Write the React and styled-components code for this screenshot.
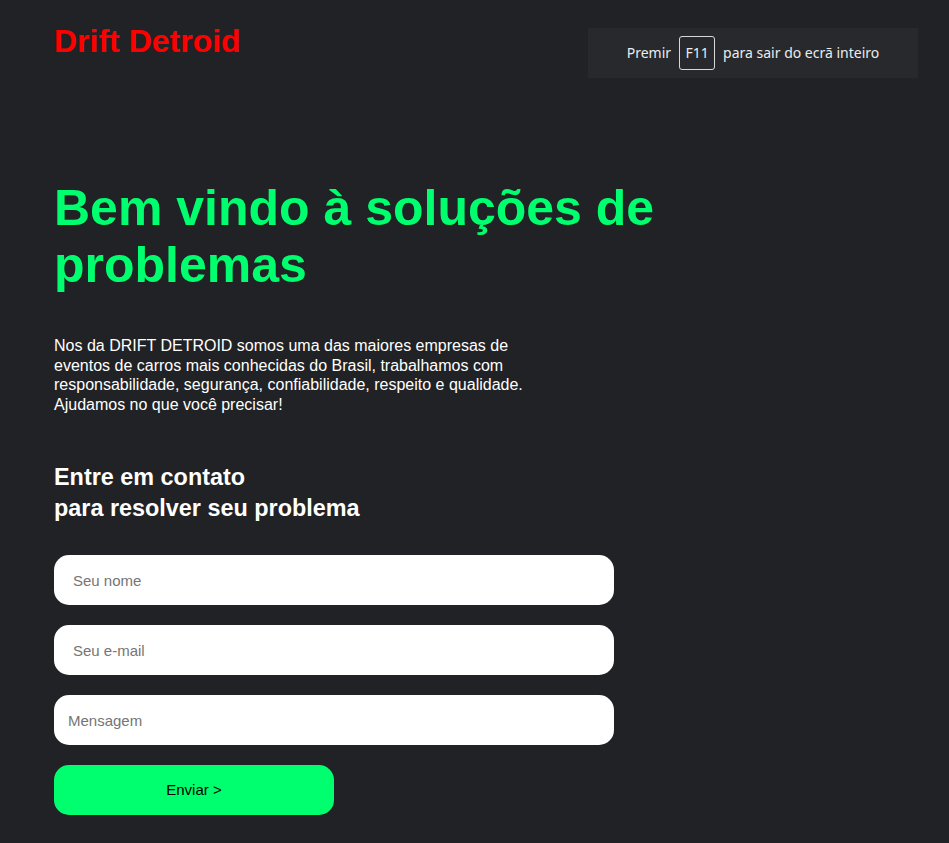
import React from "react";
import styled, { createGlobalStyle } from "styled-components";

const GlobalStyle = createGlobalStyle`
  html, body {
    margin: 0;
    padding: 0;
    background: #212225;
  }
  body {
    font-family: "Liberation Sans", Arial, sans-serif;
    min-height: 843px;
  }
  * { box-sizing: border-box; }
`;

const Page = styled.div`
  position: relative;
  min-height: 843px;
  padding: 23px 54px 0;
  background: #212225;
  color: #ffffff;
`;

const Header = styled.header`
  display: flex;
  align-items: center;
`;

const Logo = styled.h1`
  margin: 0;
  font-size: 32px;
  line-height: 36.8px;
  font-weight: 700;
  color: #ff0000;
`;

const FullscreenNotice = styled.div`
  position: absolute;
  top: 28px;
  right: 31px;
  width: 330px;
  height: 50px;
  display: flex;
  align-items: center;
  justify-content: center;
  gap: 8px;
  padding-bottom: 1px;
  background: #27292d;
  color: #ececec;
  font-family: "Noto Sans", "Open Sans", sans-serif;
  font-size: 14px;
`;

const Key = styled.span`
  display: inline-flex;
  align-items: center;
  justify-content: center;
  width: 36px;
  height: 34px;
  border: 1px solid #d8d8d8;
  border-radius: 3px;
`;

const Main = styled.main`
  margin-top: 120px;
`;

const Title = styled.h2`
  margin: 0 0 41px;
  max-width: 700px;
  font-size: 50px;
  line-height: 57.5px;
  font-weight: 700;
  color: #00ff6e;
`;

const Intro = styled.p`
  margin: 0 0 47px;
  max-width: 480px;
  font-size: 16px;
  line-height: 19.7px;
  color: #ffffff;
`;

const Subtitle = styled.h3`
  margin: 0 0 31px;
  font-size: 23.4px;
  line-height: 31px;
  font-weight: 700;
  color: #ffffff;
`;

const Form = styled.form`
  display: flex;
  flex-direction: column;
  gap: 20px;
  width: 560px;
`;

const Field = styled.input`
  width: 100%;
  height: 50px;
  padding: 1px 19px 0;
  border: none;
  border-radius: 15px;
  background: #ffffff;
  font-family: "Liberation Sans", Arial, sans-serif;
  font-size: 15px;
  color: #222;
  outline: none;
  &::placeholder { color: #757575; }
`;

const Message = styled.textarea`
  width: 100%;
  height: 50px;
  padding: 17px 14px 0;
  border: none;
  border-radius: 15px;
  background: #ffffff;
  font-family: "Liberation Sans", Arial, sans-serif;
  font-size: 15px;
  line-height: 17.25px;
  color: #222;
  resize: none;
  outline: none;
  overflow: hidden;
  display: block;
  &::placeholder { color: #757575; }
`;

const Submit = styled.button`
  width: 280px;
  height: 50px;
  border: none;
  border-radius: 15px;
  background: #00ff6e;
  color: #000000;
  font-family: "Liberation Sans", Arial, sans-serif;
  font-size: 15px;
  cursor: pointer;
`;

export default function App() {
  return (
    <>
      <GlobalStyle />
      <Page>
        <Header>
          <Logo>Drift Detroid</Logo>
        </Header>
        <FullscreenNotice>
          <span>Premir</span>
          <Key>F11</Key>
          <span>para sair do ecrã inteiro</span>
        </FullscreenNotice>
        <Main>
          <Title>Bem vindo à soluções de problemas</Title>
          <Intro>
            Nos da DRIFT DETROID somos uma das maiores empresas de eventos de
            carros mais conhecidas do Brasil, trabalhamos com responsabilidade,
            segurança, confiabilidade, respeito e qualidade. Ajudamos no que
            você precisar!
          </Intro>
          <Subtitle>
            Entre em contato
            <br />
            para resolver seu problema
          </Subtitle>
          <Form onSubmit={(e) => e.preventDefault()}>
            <Field type="text" placeholder="Seu nome" />
            <Field type="email" placeholder="Seu e-mail" />
            <Message placeholder="Mensagem" />
            <Submit type="submit">Enviar &gt;</Submit>
          </Form>
        </Main>
      </Page>
    </>
  );
}
